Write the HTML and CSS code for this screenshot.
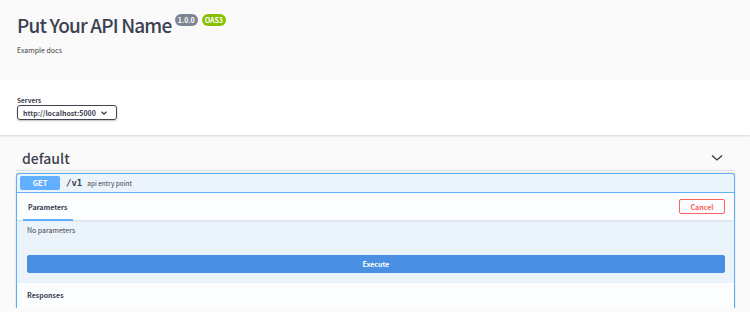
FILE: index.html
```html
<!DOCTYPE html>
<html lang="en">
<head>
  <meta charset="UTF-8">
  <title>Swagger UI</title>
  <link rel="stylesheet" href="styles.css">
</head>
<body>
  <div class="info">
    <h2 class="title">Put Your API Name <span class="badge version">1.0.0</span><span class="badge oas">OAS3</span></h2>
    <p class="desc">Example docs</p>
  </div>

  <div class="scheme">
    <span class="servers-label">Servers</span>
    <div class="select">http://localhost:5000 <svg width="8" height="6" viewBox="0 0 8 6"><path d="M1.5 1.8 L4 4.2 L6.5 1.8" fill="none" stroke="#333" stroke-width="1.2"/></svg></div>
  </div>

  <div class="main">
    <div class="tag">
      <h3>default</h3>
      <svg class="arrow" width="12" height="8" viewBox="0 0 12 8"><path d="M1 1.5 L6 6 L11 1.5" fill="none" stroke="#333" stroke-width="1.3"/></svg>
    </div>

    <div class="opblock">
      <div class="summary">
        <span class="method">GET</span>
        <span class="path">/v1</span>
        <span class="summary-desc">api entry point</span>
      </div>
      <div class="section-header">
        <div class="tab">Parameters</div>
        <button class="cancel">Cancel</button>
      </div>
      <div class="params">
        <p>No parameters</p>
        <button class="execute">Execute</button>
      </div>
      <div class="responses">Responses</div>
    </div>
  </div>
</body>
</html>
```

FILE: styles.css
```css
body {
  margin: 0;
  background: #fafafa;
  font-family: "Noto Sans CJK KR", "Noto Sans", sans-serif;
  color: #3b4151;
}
.info {
  height: 80px;
  padding: 10px 17px 0;
  box-sizing: border-box;
}
.title {
  margin: 0;
  font-size: 19px;
  font-weight: 500;
  color: #3b4151;
  line-height: 30px;
  letter-spacing: -0.85px;
}
.badge {
  display: inline-block;
  position: relative;
  top: -10px;
  font-size: 7px;
  font-weight: 700;
  color: #fff;
  line-height: 10px;
  padding: 1px 3px;
  border-radius: 6px;
  letter-spacing: 0;
  vertical-align: baseline;
}
.version { background: #7d8492; margin-left: 0; }
.oas { background: #89bf04; margin-left: 4px; }
.desc {
  margin: 5px 0 0;
  font-size: 7px;
  color: #3b3b3b;
}
.scheme {
  background: #fff;
  height: 55px;
  padding: 15px 17px 0;
  box-sizing: border-box;
  box-shadow: 0 1px 2px 0 rgba(0,0,0,.15);
}
.servers-label {
  display: block;
  font-size: 6.5px;
  font-weight: 700;
  line-height: 10px;
}
.select {
  display: flex;
  align-items: center;
  justify-content: space-between;
  width: 100px;
  height: 15px;
  box-sizing: border-box;
  border: 1.5px solid #41444e;
  border-radius: 3px;
  padding: 0 8px 0 5px;
  font-size: 7px;
  font-weight: 700;
  box-shadow: 0 1px 2px 0 rgba(0,0,0,.25);
}
.main {
  padding: 0 15px 0 16px;
}
.tag {
  display: flex;
  align-items: center;
  justify-content: space-between;
  margin-top: 10px;
  height: 25px;
  padding: 0 12px 0 6px;
  border-bottom: 1px solid rgba(59,65,81,.15);
}
.tag h3 {
  margin: 0;
  font-size: 14px;
  font-weight: 500;
}
.opblock {
  margin-top: 2px;
  border: 1px solid #61affe;
  border-bottom: none;
  border-radius: 3px 3px 0 0;
  background: #ebf3fb;
  box-shadow: 0 0 2px rgba(0,0,0,.19);
}
.summary {
  display: flex;
  align-items: center;
  height: 18px;
  padding: 0 3px;
  border-bottom: 1px solid #61affe;
}
.method {
  width: 40px;
  height: 14px;
  line-height: 14px;
  background: #61affe;
  color: #fff;
  border-radius: 2px;
  text-align: center;
  font-size: 7.5px;
  font-weight: 700;
}
.path {
  margin-left: 6px;
  font-family: "DejaVu Sans Mono", monospace;
  font-weight: 700;
  font-size: 9px;
}
.summary-desc {
  margin-left: 5px;
  font-size: 6.5px;
}
.section-header {
  display: flex;
  align-items: center;
  justify-content: space-between;
  height: 27px;
  padding: 0 9px 0 6px;
  background: rgba(255,255,255,.8);
  box-shadow: 0 1px 2px rgba(0,0,0,.1);
}
.tab {
  align-self: stretch;
  display: flex;
  align-items: center;
  padding: 1px 5px 0;
  font-size: 7px;
  font-weight: 700;
  border-bottom: 2px solid #61affe;
  margin-bottom: -1px;
  box-sizing: border-box;
}
.cancel {
  width: 46px;
  height: 15px;
  background: transparent;
  border: 1.5px solid #ff6060;
  border-radius: 2px;
  color: #ff6060;
  font-family: inherit;
  font-size: 7px;
  font-weight: 700;
  padding: 0;
}
.params {
  padding: 4px 9px 10px 10px;
}
.params p {
  margin: 0;
  font-size: 7px;
  line-height: 12px;
}
.execute {
  display: block;
  width: 100%;
  height: 18px;
  margin-top: 19px;
  background: #4990e2;
  border: 1px solid #4990e2;
  border-radius: 2px;
  color: #fff;
  font-family: inherit;
  font-size: 7px;
  font-weight: 700;
  padding: 0;
}
.responses {
  height: 25px;
  line-height: 25px;
  padding: 0 10px;
  font-size: 7px;
  font-weight: 700;
  background: rgba(255,255,255,.8);
  box-shadow: 0 1px 2px rgba(0,0,0,.1);
}
```
